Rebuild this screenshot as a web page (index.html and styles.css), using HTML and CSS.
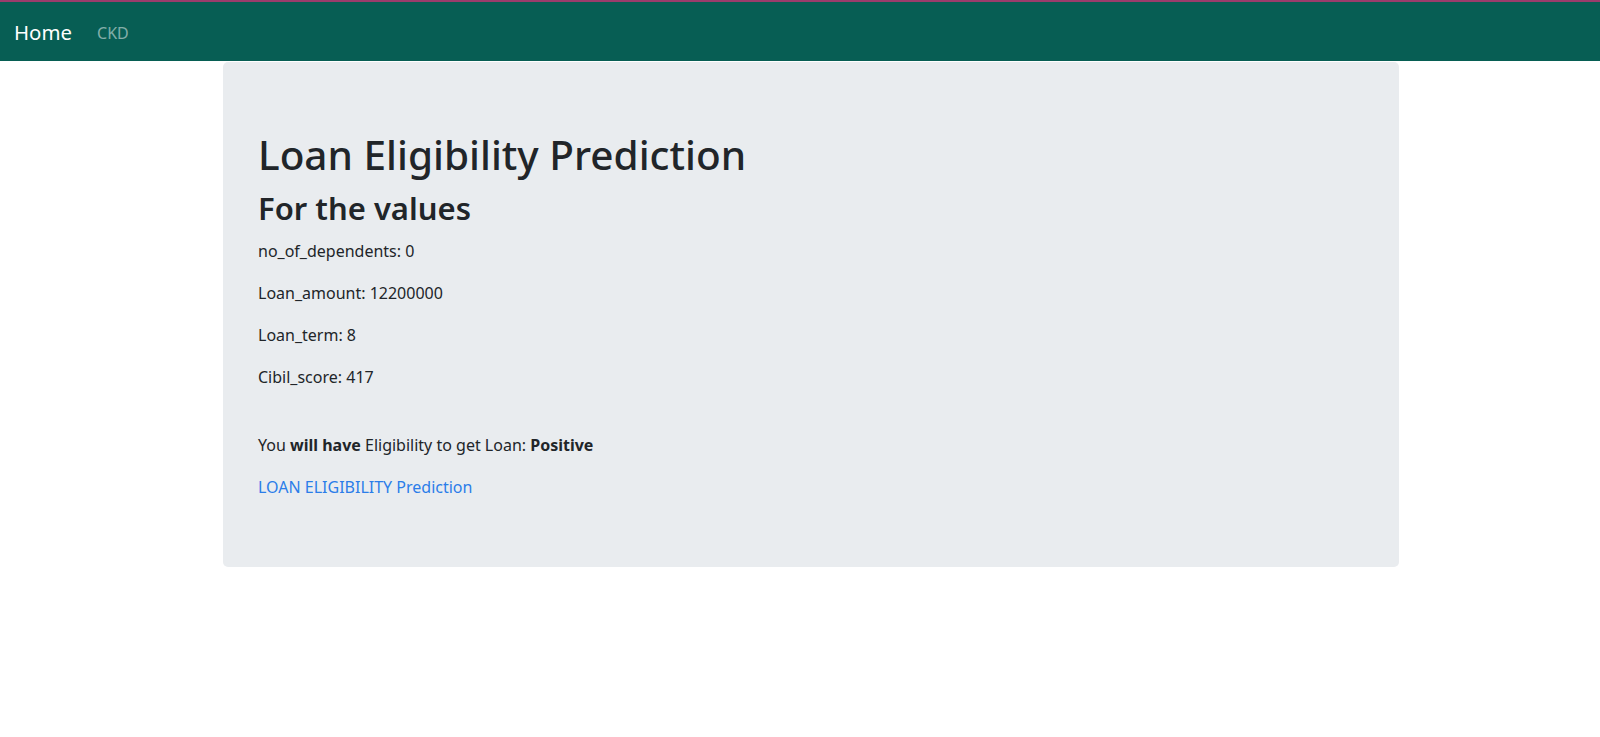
FILE: index.html
```html
<!DOCTYPE html>
<html lang="en">
<head>
<meta charset="utf-8">
<title>Loan Eligibility Prediction</title>
<link rel="stylesheet" href="styles.css">
</head>
<body>
<nav class="navbar">
  <a class="brand" href="#">Home</a>
  <a class="nav-link" href="#">CKD</a>
</nav>
<main class="container">
  <div class="jumbotron">
    <h1>Loan Eligibility Prediction</h1>
    <h2>For the values</h2>
    <p>no_of_dependents: 0</p>
    <p>Loan_amount: 12200000</p>
    <p>Loan_term: 8</p>
    <p>Cibil_score: 417</p>
    <br>
    <p>You <b>will have</b> Eligibility to get Loan: <b>Positive</b></p>
    <a class="link" href="#">LOAN ELIGIBILITY Prediction</a>
  </div>
</main>
</body>
</html>
```
FILE: styles.css
```css
html, body {
  margin: 0;
  padding: 0;
}
body {
  font-family: "Noto Sans", "Open Sans", sans-serif;
  font-size: 16px;
  line-height: 1.5;
  color: #212529;
  background: #fff;
}
.navbar {
  border-top: 2px solid #9b3c6c;
  background: #075e54;
  display: flex;
  align-items: center;
  padding: 2px 14px 0;
  box-sizing: border-box;
  height: 61px;
}
.brand {
  color: #fff;
  text-decoration: none;
  font-size: 20.4px;
  margin-right: 25px;
}
.nav-link {
  color: rgba(255,255,255,0.5);
  text-decoration: none;
  font-size: 16px;
}
.container {
  width: 1176px;
  margin: 1px 0 0 223px;
}
.jumbotron {
  background: #e9ecef;
  border-radius: 5px;
  padding: 69px 35px 67px;
  line-height: 26px;
}
h1 {
  margin: 0 0 10px;
  font-size: 40.5px;
  font-weight: 500;
  line-height: 1.2;
}
h2 {
  margin: 0 0 11.8px;
  font-size: 31px;
  font-weight: 600;
  line-height: 1.2;
}
p {
  margin: 0 0 16.8px;
  font-size: 16px;
  line-height: 25.3px;
}
b {
  font-weight: 700;
}
.link {
  color: #2b7de9;
  text-decoration: none;
  font-size: 16px;
  line-height: 25.3px;
  display: block;
}
```
